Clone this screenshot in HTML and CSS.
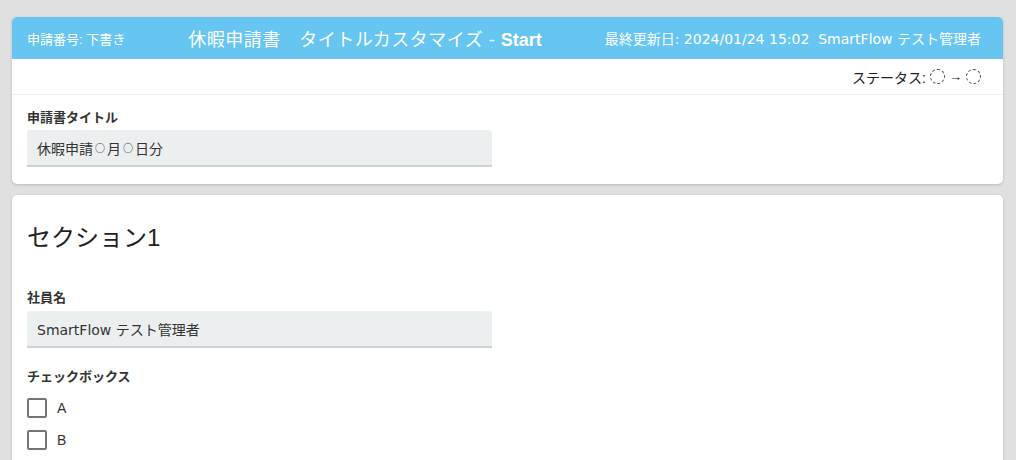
FILE: index.html
```html
<!DOCTYPE html>
<html lang="ja">
<head>
<meta charset="utf-8">
<link rel="stylesheet" href="styles.css">
</head>
<body>
<div class="page">
  <div class="card">
    <div class="header">
      <div class="h-left">申請番号: 下書き</div>
      <div class="h-title">休暇申請書　タイトルカスタマイズ - <b>Start</b></div>
      <div class="h-right">最終更新日: 2024/01/24 15:02&nbsp;&nbsp;SmartFlow テスト管理者</div>
    </div>
    <div class="status-row">
      <span>ステータス:</span>
      <span class="dash-circle"></span>
      <span class="arrow">→</span>
      <span class="dash-circle"></span>
    </div>
    <div class="title-section">
      <div class="field-label">申請書タイトル</div>
      <div class="field-input cjk">休暇申請<span class="mk">○</span>月<span class="mk">○</span>日分</div>
    </div>
  </div>
  <div class="card section">
    <h2 class="section-title">セクション1</h2>
    <div class="field">
      <div class="field-label">社員名</div>
      <div class="field-input">SmartFlow テスト管理者</div>
    </div>
    <div class="field checks">
      <div class="field-label">チェックボックス</div>
      <label class="check-row"><span class="box"></span><span>A</span></label>
      <label class="check-row"><span class="box"></span><span>B</span></label>
    </div>
  </div>
</div>
</body>
</html>
```

FILE: styles.css
```css
* { box-sizing: border-box; }
html, body { margin: 0; padding: 0; }
body {
  background: #e0e0e0;
  font-family: "Liberation Sans", "Noto Sans CJK JP", sans-serif;
  color: #333;
  overflow: hidden;
}
.page {
  padding: 17px 13px 0 12px;
  display: flex;
  flex-direction: column;
  gap: 11px;
}
.card {
  background: #fff;
  border-radius: 5px;
  box-shadow: 0 1px 3px rgba(0,0,0,0.18);
  overflow: hidden;
}
.header {
  background: #66c5f1;
  color: #fff;
  height: 42px;
  display: flex;
  align-items: center;
  justify-content: space-between;
  padding: 0 22px 0 15px;
}
.h-left { font-size: 13px; }
.h-title { font-size: 18px; letter-spacing: 0.5px; }
.h-title b { font-weight: 700; letter-spacing: 0; }
.h-right {
  font-size: 14px;
  font-family: "DejaVu Sans", "Noto Sans CJK JP", sans-serif;
}
.status-row {
  height: 36px;
  display: flex;
  align-items: center;
  justify-content: flex-end;
  gap: 4px;
  padding: 0 22px;
  font-size: 14px;
  color: #222;
  border-bottom: 1px solid #eee;
}
.dash-circle {
  width: 15px;
  height: 15px;
  border: 1px dashed #444;
  border-radius: 50%;
  display: inline-block;
}
.arrow { font-size: 13px; font-weight: 700; }
.title-section {
  padding: 14px 15px 17px;
}
.field-label {
  font-size: 13px;
  font-weight: 700;
  line-height: 18px;
  color: #333;
}
.field-input {
  margin-top: 3px;
  width: 465px;
  height: 37px;
  background: #ecefef;
  border-radius: 3px 3px 0 0;
  border-bottom: 2px solid #cfd2d3;
  display: flex;
  align-items: center;
  padding: 0 10px;
  font-size: 14px;
  color: #333;
  font-family: "DejaVu Sans", "Noto Sans CJK JP", sans-serif;
}
.field-input.cjk {
  font-family: "Noto Sans CJK JP", sans-serif;
}
.mk {
  display: inline-block;
  width: 14px;
  text-align: center;
  font-size: 10px;
}
.section {
  padding: 27px 15px 10px;
  min-height: 300px;
}
.section-title {
  margin: 0;
  font-size: 24px;
  font-weight: 400;
  line-height: 32px;
  color: #222;
}
.field { margin-top: 35px; }
.field .field-input { margin-top: 4px; }
.checks { margin-top: 20px; }
.check-row {
  display: flex;
  align-items: center;
  height: 32px;
  gap: 10px;
  font-size: 14px;
  color: #333;
}
.checks .field-label { margin-bottom: 6px; }
.box {
  width: 20px;
  height: 20px;
  border: 2px solid #757575;
  border-radius: 2px;
  display: inline-block;
}
```
